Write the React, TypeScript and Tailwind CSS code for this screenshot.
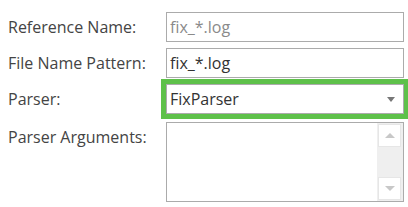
import React from "react";

const FONT = { fontFamily: '"Open Sans", "Noto Sans", sans-serif' };

function Row({ label, children, className = "" }: { label: string; children: React.ReactNode; className?: string }) {
  return (
    <>
      <div className={`h-[30px] flex items-center text-[16px] text-[#444] ${className}`}>{label}</div>
      <div className={className}>{children}</div>
    </>
  );
}

export default function App() {
  return (
    <div className="w-[408px] h-[207px] bg-white overflow-hidden pt-3 pl-2 pr-1" style={FONT}>
      <div className="grid grid-cols-[158px_238px] gap-y-[6px]">
        <Row label="Reference Name:">
          <div className="h-[30px] border border-[#ababab] px-[3px] flex items-center text-[16px] text-[#8a8a8a]">
            fix_*.log
          </div>
        </Row>
        <Row label="File Name Pattern:">
          <div className="h-[30px] border border-[#ababab] px-[3px] flex items-center text-[16px] text-[#333]">
            fix_*.log
          </div>
        </Row>
        <Row label="Parser:">
          <div className="h-[30px] border border-[#ababab] outline-[5px] outline-solid outline-[#5ec14a] px-[3px] flex items-center justify-between text-[16px] text-[#333]">
            <span>FixParser</span>
            <span className="mr-[5px] w-0 h-0 border-l-[4px] border-r-[4px] border-t-[5px] border-l-transparent border-r-transparent border-t-[#777]" />
          </div>
        </Row>
        <Row label="Parser Arguments:" className="mt-[2px]">
          <div className="h-[80px] border border-[#ababab] flex">
            <div className="flex-1" />
            <div className="w-[26px] bg-[#efefef] flex flex-col justify-between p-[1px] pr-[2px]">
              <div className="h-[23px] bg-white border border-[#e6e6e6] flex items-center justify-center">
                <span className="w-0 h-0 border-l-[5px] border-r-[5px] border-b-[5px] border-l-transparent border-r-transparent border-b-[#c8c8c8]" />
              </div>
              <div className="h-[23px] bg-white border border-[#e6e6e6] flex items-center justify-center">
                <span className="w-0 h-0 border-l-[5px] border-r-[5px] border-t-[5px] border-l-transparent border-r-transparent border-t-[#c8c8c8]" />
              </div>
            </div>
          </div>
        </Row>
      </div>
    </div>
  );
}
